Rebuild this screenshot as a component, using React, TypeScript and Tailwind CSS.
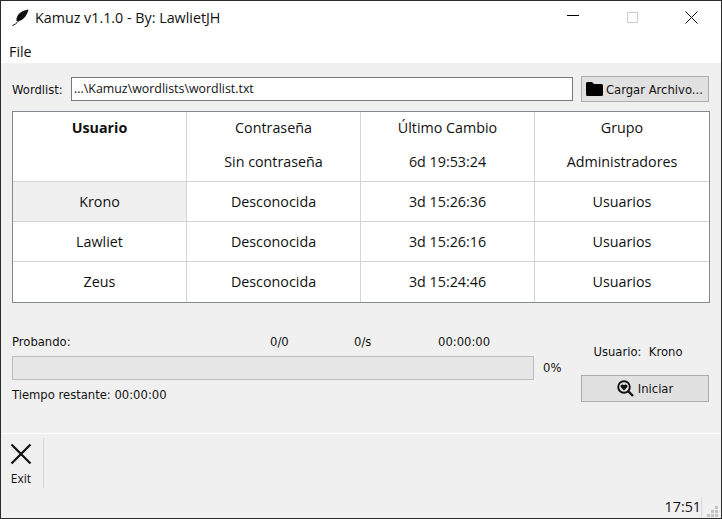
// Kamuz main window: wordlist picker, users table, progress and toolbar.
const SEGOE = "font-['Open_Sans','Noto_Sans',sans-serif]";
const TAHOMA = "font-['DejaVu_Sans',sans-serif]";

const COLUMNS = [
  ["Usuario", "Contraseña", "Último Cambio", "Grupo"],
  ["", "Sin contraseña", "6d 19:53:24", "Administradores"],
];

const ROWS = [
  ["Krono", "Desconocida", "3d 15:26:36", "Usuarios"],
  ["Lawliet", "Desconocida", "3d 15:26:16", "Usuarios"],
  ["Zeus", "Desconocida", "3d 15:24:46", "Usuarios"],
];

function Feather() {
  return (
    <svg width="17" height="17" viewBox="0 0 17 17">
      <path d="M16.500 0.500C12 1 8 3 6 6 4.800 7.800 4.200 9.800 4.500 12 8 12.500 11 10.500 13 8 14.800 5.600 16 3 16.500 0.500Z" fill="#111" />
      <path d="M0.500 16.500C2.500 15.800 4.500 14.500 7 11.500" stroke="#111" strokeWidth="1" fill="none" />
    </svg>
  );
}

function TitleBar() {
  return (
    <div className="flex h-[32px] items-center bg-white pl-[11px]">
      <Feather />
      <span className={`ml-[6px] translate-y-[1px] text-[14.300px] text-[#111] ${SEGOE}`}>Kamuz v1.1.0 - By: LawlietJH</span>
      <div className="ml-auto flex items-center pr-[7px]">
        <div className="flex w-[46px] justify-center">
          <div className="h-px w-[12px] translate-y-[-2px] bg-black" />
        </div>
        <div className="ml-[13px] flex w-[46px] justify-center">
          <div className="h-[11px] w-[11px] border border-[#ccc]" />
        </div>
        <div className="ml-[13px] flex w-[46px] justify-center">
          <svg width="13" height="13" viewBox="0 0 13 13">
            <path d="M0.500 0.500L12.500 12.500M12.500 0.500L0.500 12.500" stroke="#111" strokeWidth="1" />
          </svg>
        </div>
      </div>
    </div>
  );
}

function FolderIcon() {
  return (
    <svg width="17" height="14" viewBox="0 0 17 14">
      <path d="M0 1.500Q0 0 1.500 0H6L8 2H15.500Q17 2 17 3.500V12.500Q17 14 15.500 14H1.500Q0 14 0 12.500Z" fill="#000" />
    </svg>
  );
}

function SearchHeartIcon() {
  return (
    <svg width="17" height="17" viewBox="0 0 17 17">
      <circle cx="7" cy="7" r="5.800" stroke="#111" strokeWidth="1.900" fill="none" />
      <path d="M11 11L16 16" stroke="#111" strokeWidth="2.400" />
      <path d="M7 10.400L3.700 7.100C2.700 5.300 5.500 3.500 7 5.300 8.500 3.500 11.300 5.300 10.300 7.100Z" fill="#111" />
    </svg>
  );
}

function ResizeGrip() {
  return (
    <svg width="11" height="11" viewBox="0 0 11 11" fill="#c4c4c4">
      <rect x="8" y="0" width="3" height="3" />
      <rect x="4" y="4" width="3" height="3" />
      <rect x="8" y="4" width="3" height="3" />
      <rect x="0" y="8" width="3" height="3" />
      <rect x="4" y="8" width="3" height="3" />
      <rect x="8" y="8" width="3" height="3" />
    </svg>
  );
}

function UsersTable() {
  return (
    <div className={`mt-[9px] border border-[#828790] bg-white text-[14.300px] text-[#111] ${SEGOE}`}>
      <div className="border-b border-[#d4d4d4]">
        {COLUMNS.map((row, i) => (
          <div key={i} className="grid h-[34.500px] grid-cols-4">
            {row.map((cell, j) => (
              <div
                key={j}
                className={`flex items-center justify-center pb-[4px] ${j < 3 ? "border-r border-[#d4d4d4]" : ""} ${i === 0 && j === 0 ? "font-bold" : ""}`}
              >
                {cell}
              </div>
            ))}
          </div>
        ))}
      </div>
      {ROWS.map((row, i) => (
        <div key={row[0]} className={`grid h-[40px] grid-cols-4 ${i < 2 ? "border-b border-[#d4d4d4]" : ""}`}>
          {row.map((cell, j) => (
            <div
              key={j}
              className={`flex items-center justify-center ${j < 3 ? "border-r border-[#d4d4d4]" : ""} ${i === 0 && j === 0 ? "bg-[#f0f0f0]" : ""}`}
            >
              {cell}
            </div>
          ))}
        </div>
      ))}
    </div>
  );
}

export default function App() {
  return (
    <div className="flex h-[519px] w-[722px] flex-col overflow-hidden border border-[#2b2b2b] bg-[#f0f0f0]">
      <TitleBar />
      <div className={`flex h-[30px] items-center bg-white pl-[8px] pt-[7px] text-[14.300px] text-[#111] ${SEGOE}`}>File</div>

      <div className="px-[11px]">
        <div className={`mt-[13px] flex h-[26px] items-center text-[11.600px] text-[#111] ${TAHOMA}`}>
          <span className="w-[59px] translate-y-[2px]">Wordlist:</span>
          <div className={`flex h-[24px] w-[502px] items-center border border-[#7a7a7a] bg-white pl-[2px] text-[12.400px] ${SEGOE}`}>
            ...\Kamuz\wordlists\wordlist.txt
          </div>
          <button className="ml-[8px] flex h-[26px] w-[128px] items-center gap-[3px] border border-[#adadad] bg-[#e1e1e1] pl-[4px]">
            <FolderIcon />
            <span className="translate-y-[2px] whitespace-nowrap">Cargar Archivo...</span>
          </button>
        </div>

        <UsersTable />

        <div className={`mt-[31px] flex text-[11.600px] text-[#111] ${TAHOMA}`}>
          <div className="w-[522px]">
            <div className="relative flex h-[15px] items-center pt-[2px]">
              <span>Probando:</span>
              <span className="absolute left-[258px]">0/0</span>
              <span className="absolute left-[342px]">0/s</span>
              <span className="absolute left-[426px]">00:00:00</span>
            </div>
            <div className="mt-[7px] h-[24px] border border-[#bcbcbc] bg-[#e6e6e6]" />
            <div className="mt-[7px]">Tiempo restante: 00:00:00</div>
          </div>
          <div className="ml-[9px] w-[38px] pt-[26px]">0%</div>
          <div className="flex w-[128px] flex-col">
            <div className="flex h-[16px] items-center justify-center pr-[14px] pt-[19px]">Usuario:&nbsp; Krono</div>
            <button className="mt-[22px] flex h-[27px] items-center justify-center gap-[4px] border border-[#adadad] bg-[#e1e1e1]">
              <SearchHeartIcon />
              <span className="translate-y-[1px]">Iniciar</span>
            </button>
          </div>
        </div>
      </div>

      <div className="flex-1" />
      <div className={`flex h-[62px] items-start border-t border-white pt-[4px] ${SEGOE}`}>
        <div className="flex h-[50px] w-[43px] flex-col items-center border-r border-[#d8d8d8] pr-[2px]">
          <svg width="22" height="22" viewBox="0 0 22 22" className="mt-[5px]">
            <path d="M1.500 1.500L20.500 20.500M20.500 1.500L1.500 20.500" stroke="#111" strokeWidth="2.200" />
          </svg>
          <span className="mt-[5px] text-[12px] text-[#111]">Exit</span>
        </div>
      </div>
      <div className={`flex h-[23px] items-end justify-end ${SEGOE}`}>
        <span className="pb-[1px] text-[14.300px] leading-[20px] text-[#111]">17:51</span>
        <div className="h-[21px] w-px bg-[#d8d8d8]" />
        <div className="mb-[1px] ml-[5px] mr-[3px]">
          <ResizeGrip />
        </div>
      </div>
    </div>
  );
}
